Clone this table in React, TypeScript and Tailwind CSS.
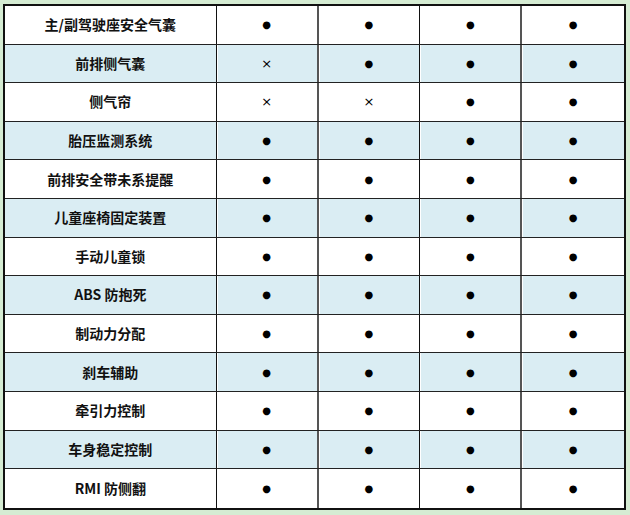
import React from "react";

const rows: [string, string[]][] = [
  ["主/副驾驶座安全气囊", ["●", "●", "●", "●"]],
  ["前排侧气囊", ["×", "●", "●", "●"]],
  ["侧气帘", ["×", "×", "●", "●"]],
  ["胎压监测系统", ["●", "●", "●", "●"]],
  ["前排安全带未系提醒", ["●", "●", "●", "●"]],
  ["儿童座椅固定装置", ["●", "●", "●", "●"]],
  ["手动儿童锁", ["●", "●", "●", "●"]],
  ["ABS 防抱死", ["●", "●", "●", "●"]],
  ["制动力分配", ["●", "●", "●", "●"]],
  ["刹车辅助", ["●", "●", "●", "●"]],
  ["牵引力控制", ["●", "●", "●", "●"]],
  ["车身稳定控制", ["●", "●", "●", "●"]],
  ["RMI 防侧翻", ["●", "●", "●", "●"]],
];

const colBorder = [
  "border-r border-r-[#111]",
  "border-r-2 border-r-[#555]",
  "border-r border-r-[#111]",
  "border-r-2 border-r-[#555]",
  "",
];

export default function App() {
  return (
    <div className="w-[630px] h-[515px] bg-[#d5ecd3] pt-[4px] pl-[3px]">
      <div
        className="w-[623px] border-2 border-[#111] bg-white flex flex-col"
        style={{ fontFamily: '"Noto Sans CJK SC", "Noto Sans", sans-serif' }}
      >
        {rows.map(([label, vals], i) => {
          const blue = i % 2 === 1;
          const bg = blue ? "bg-[#daedf3]" : "bg-white";
          const rowBorder = i < rows.length - 1 ? "border-b border-b-[#222]" : "";
          return (
            <div key={i} className={`flex h-[38.6px] ${rowBorder}`}>
              <div
                className={`w-[212px] flex items-center justify-center text-[14px] font-bold text-[#111] ${bg} ${colBorder[0]}`}
              >
                {label}
              </div>
              {vals.map((v, j) => (
                <div
                  key={j}
                  className={`w-[102px] flex items-center justify-center text-[#000] ${bg} ${colBorder[j + 1]} ${
                    blue ? "shadow-[inset_1px_0_0_#fff]" : ""
                  } ${v === "●" ? "text-[10px]" : "text-[13px]"}`}
                  style={{ fontFamily: '"DejaVu Sans", sans-serif' }}
                >
                  {v}
                </div>
              ))}
            </div>
          );
        })}
      </div>
    </div>
  );
}
